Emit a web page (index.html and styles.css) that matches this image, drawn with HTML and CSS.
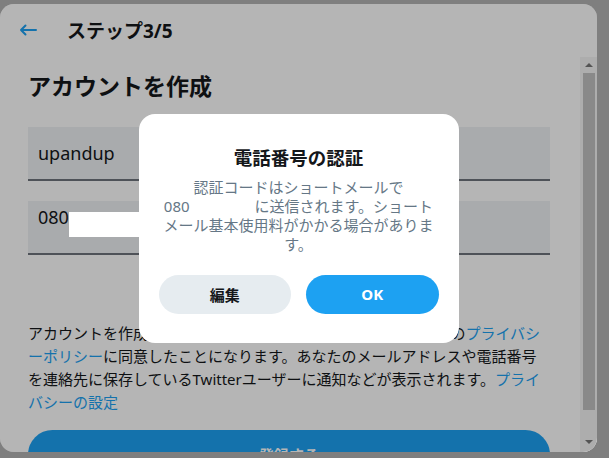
FILE: index.html
```html
<!DOCTYPE html>
<html lang="ja">
<head>
  <meta charset="UTF-8" />
  <meta name="viewport" content="width=device-width, initial-scale=1.0"/>
  <title>アカウントを作成 / Twitter</title>
  <link rel="stylesheet" href="styles.css">
</head>
<body>
  <div class="panel">
    <header class="top">
      <svg class="back" width="18" height="12" viewBox="0 0 18 12">
        <path d="M17 6H2M6.5 1.5L2 6l4.5 4.5" fill="none" stroke="#1da1f2" stroke-width="2" stroke-linecap="round" stroke-linejoin="round"/>
      </svg>
      <span class="step">ステップ3/5</span>
    </header>

    <main class="body">
      <div class="content">
        <h1>アカウントを作成</h1>

        <div class="field"><span>upandup</span></div>
        <div class="field field-phone"><span>080</span><span class="redact"></span></div>

        <p class="terms">
          アカウントを作成すると、<a href="#">利用規約</a>とCookieの使用を含む弊社の<a href="#">プライバシーポリシー</a>に同意したことになります。あなたのメールアドレスや電話番号を連絡先に保存しているTwitterユーザーに通知などが表示されます。<a href="#">プライバシーの設定</a>
        </p>

        <button class="signup">登録する</button>
      </div>

      <!-- fake scrollbar -->
      <div class="scrollbar">
        <div class="sb-btn"><i class="tri-up"></i></div>
        <div class="sb-thumb"></div>
        <div class="sb-track"></div>
        <div class="sb-btn sb-down"><i class="tri-down"></i></div>
      </div>
    </main>

    <div class="dim">
      <div class="modal">
        <h2>電話番号の認証</h2>
        <p>認証コードはショートメールで<span class="num">080<span class="blank"></span></span>に送信されます。ショートメール基本使用料がかかる場合があります。</p>
        <div class="actions">
          <button class="btn btn-edit">編集</button>
          <button class="btn btn-ok">OK</button>
        </div>
      </div>
    </div>
  </div>
</body>
</html>
```

FILE: styles.css
```css
html, body {
  margin: 0;
  height: 100%;
}
body {
  background-color: #7f7f7f;
  font-family: "Noto Sans", "Noto Sans CJK JP", sans-serif;
  color: #14171a;
  padding-top: 4px;
  box-sizing: border-box;
  overflow: hidden;
}
.panel {
  position: relative;
  width: 597px;
  height: 448px;
  background: #fff;
  border-radius: 14px;
  overflow: hidden;
  display: flex;
  flex-direction: column;
}
.top {
  height: 53px;
  flex: none;
  display: flex;
  align-items: center;
  padding-left: 19px;
}
.back {
  display: block;
  margin-top: -2px;
}
.step {
  margin-left: 30px;
  font-size: 19px;
  font-weight: 700;
  line-height: 24px;
}
.body {
  flex: 1;
  display: flex;
  min-height: 0;
}
.content {
  flex: 1;
  padding: 0 30px 0 28px;
  overflow: hidden;
}
h1 {
  margin: 15px 0 27px;
  font-size: 23px;
  line-height: 28px;
  font-weight: 700;
}
.field {
  height: 52px;
  box-sizing: content-box;
  background: #eef1f4;
  border-bottom: 2px solid #6f747c;
  padding: 14px 10px 0;
  box-sizing: border-box;
  height: 54px;
  font-size: 18px;
  line-height: 24px;
  display: flex;
}
.field + .field {
  margin-top: 20px;
}
.field-phone {
  padding-top: 4px;
}
.redact {
  position: relative;
  z-index: 2;
  display: inline-block;
  width: 70px;
  height: 25px;
  margin-top: 7px;
  background: #fff;
}
.terms {
  margin: 67px 0 0;
  font-size: 15px;
  line-height: 23px;
}
.terms a {
  color: #1da1f2;
  text-decoration: none;
}
.signup {
  display: block;
  width: 100%;
  height: 49px;
  margin-top: 16px;
  border: 0;
  border-radius: 999px;
  background: #1da1f2;
  color: #fff;
  font: 700 15px "Noto Sans", "Noto Sans CJK JP", sans-serif;
}
.scrollbar {
  width: 17px;
  flex: none;
  display: flex;
  flex-direction: column;
  background: #f4f4f4;
}
.sb-btn {
  height: 16px;
  flex: none;
  display: flex;
  align-items: center;
  justify-content: center;
}
.sb-down {
  margin-bottom: 2px;
}
.sb-thumb {
  height: 337px;
  flex: none;
  margin: 0 2px 0 3px;
  background: #c1c1c1;
}
.sb-track {
  flex: 1;
}
.tri-up, .tri-down {
  width: 0;
  height: 0;
  border-left: 4px solid transparent;
  border-right: 4px solid transparent;
}
.tri-up {
  border-bottom: 4px solid #777;
}
.tri-down {
  border-top: 4px solid #777;
}
.dim {
  position: absolute;
  inset: 0;
  z-index: 1;
  background: rgba(0, 0, 0, 0.29);
  display: flex;
  align-items: center;
  justify-content: center;
}
.modal {
  width: 320px;
  box-sizing: border-box;
  padding: 32px 20px 29px;
  background: #fff;
  border-radius: 16px;
  text-align: center;
}
.modal h2 {
  margin: 0;
  font-size: 18.5px;
  line-height: 24px;
  font-weight: 700;
}
.modal p {
  margin: 8px 0 0;
  font-size: 15px;
  line-height: 19px;
  color: #657786;
}
.num {
  white-space: nowrap;
}
.blank {
  display: inline-block;
  width: 65px;
}
.actions {
  display: flex;
  gap: 15px;
  margin-top: 21px;
}
.btn {
  flex: 1;
  height: 39px;
  border: 0;
  border-radius: 999px;
  font: 700 15px "Noto Sans", "Noto Sans CJK JP", sans-serif;
}
.btn-edit {
  background: #e6ecf0;
  color: #14171a;
}
.btn-ok {
  background: #1da1f2;
  color: #fff;
}
```
